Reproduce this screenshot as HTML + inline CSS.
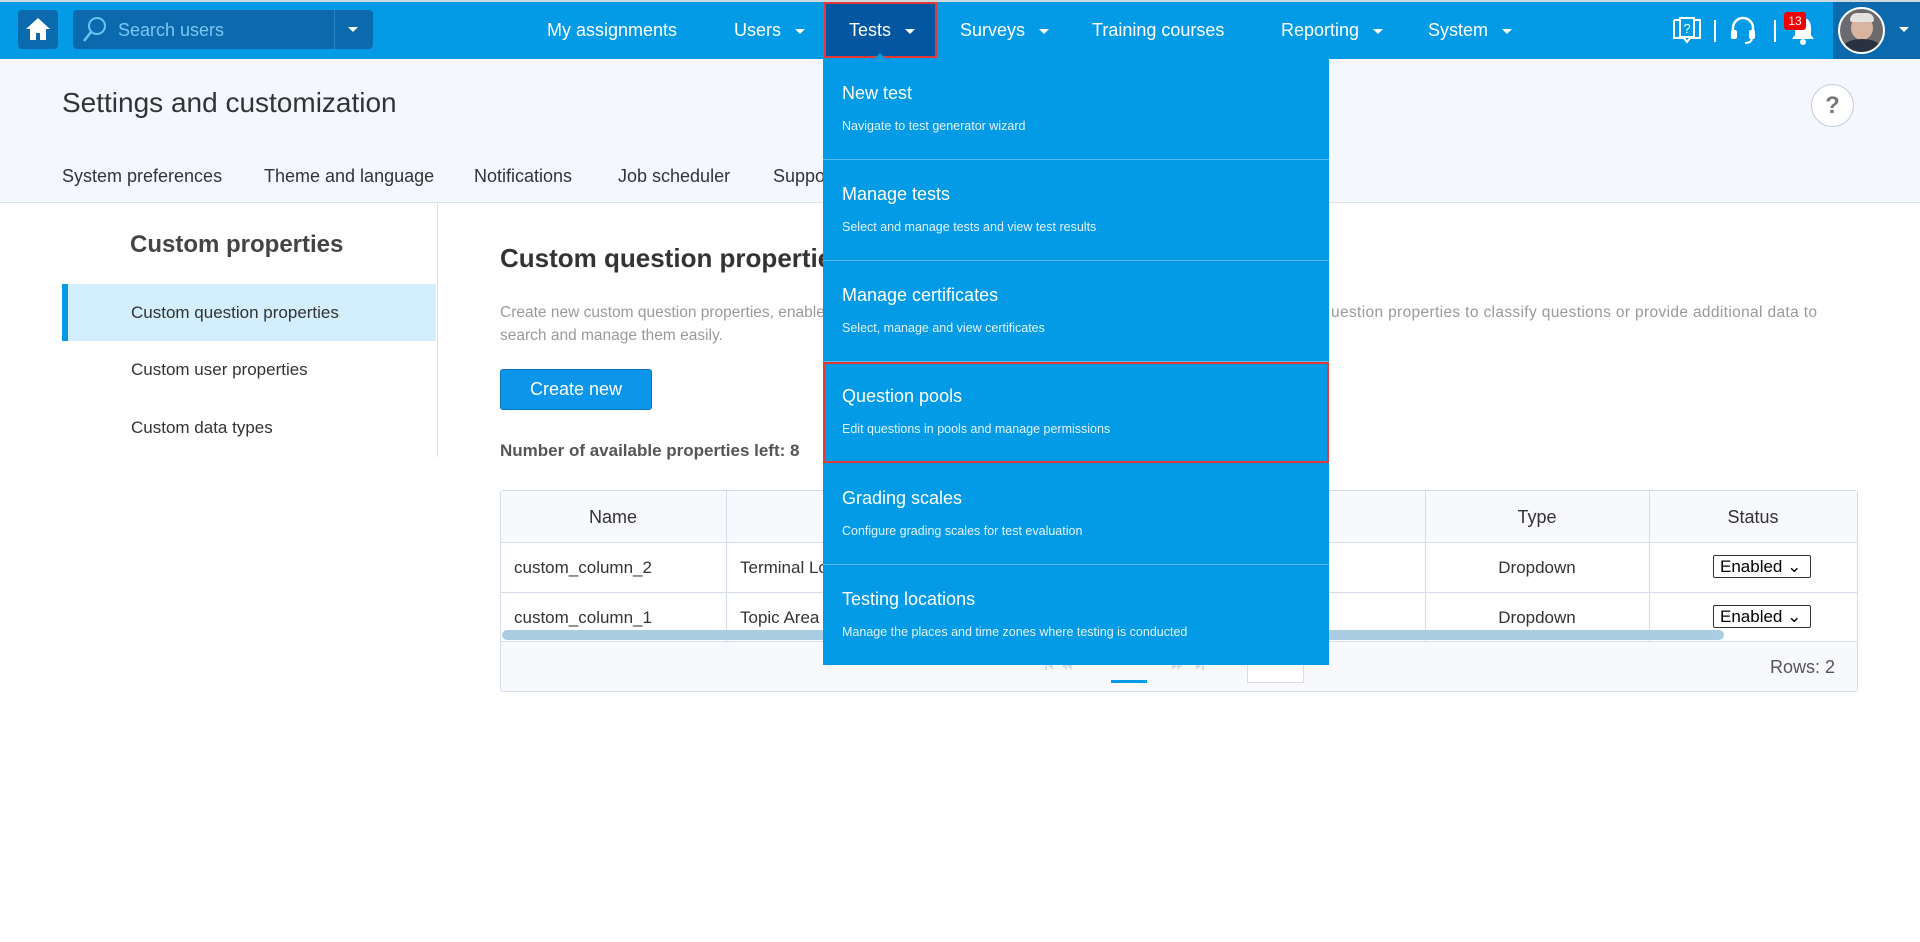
<!DOCTYPE html>
<html><head><meta charset="utf-8"><style>
*{box-sizing:border-box;margin:0;padding:0}
body{width:1920px;height:942px;overflow:hidden;background:#fff;font-family:"Liberation Sans",sans-serif;position:relative;color:#333}
.abs{position:absolute}
.hdr{left:0;top:0;width:1920px;height:59px;background:#039be5;border-top:2px solid #cfd8dc}
.nav{top:1px;height:59px;line-height:59px;color:#fff;font-size:18px;white-space:nowrap}
.car{display:inline-block;width:0;height:0;border-left:5px solid transparent;border-right:5px solid transparent;border-top:5px solid #fff;vertical-align:middle;margin-left:14px}
.sub{left:0;top:59px;width:1920px;height:144px;background:#f4f8fe;border-bottom:1px solid #dde1ea}
.tab{top:166px;font-size:18px;color:#333}
.menu{left:823px;top:59px;width:506px;height:606px;background:#039be5}
.mi{position:absolute;left:0;width:506px;height:101px;border-bottom:1px solid #57baf0}
.mi b{position:absolute;left:19px;top:24px;font-weight:normal;font-size:18px;color:#fff}
.mi i{position:absolute;left:19px;top:60px;font-style:normal;font-size:12.5px;color:#e3f4fd}
.th{top:490px;height:52px;line-height:54px;font-size:18px;color:#333}
.td{font-size:17px;color:#333}
.sel{width:98px;height:23px;border:1px solid #333;border-radius:2px;background:#fff;font-size:17px;line-height:21px;padding-left:6px;color:#000}
</style></head><body>
<div class="abs hdr"></div>
<div class="abs" style="left:18px;top:10px;width:40px;height:39px;background:#0a6aad;border-radius:4px"></div>
<svg class="abs" style="left:25px;top:17px" width="26" height="24" viewBox="0 0 26 24"><path d="M13 1 L1 12 H5 V23 H11 V16 H15 V23 H21 V12 H25 Z" fill="#fff"/></svg>
<div class="abs" style="left:73px;top:10px;width:300px;height:39px;background:#0a6aad;border-radius:4px"></div>
<div class="abs" style="left:334px;top:10px;width:1px;height:39px;background:#2b86c4"></div>
<svg class="abs" style="left:82px;top:16px" width="26" height="28" viewBox="0 0 26 28"><circle cx="15" cy="10" r="8" fill="none" stroke="#6cc3f2" stroke-width="2"/><path d="M9 16 L2 25" stroke="#6cc3f2" stroke-width="2.5"/></svg>
<div class="abs" style="left:118px;top:11px;line-height:39px;font-size:18px;color:#7cc6ef">Search users</div>
<div class="abs" style="left:348px;top:27px;width:0;height:0;border-left:5px solid transparent;border-right:5px solid transparent;border-top:5px solid #fff"></div>
<div class="abs nav" style="left:547px">My assignments</div>
<div class="abs nav" style="left:734px">Users<span class="car"></span></div>
<div class="abs" style="left:824px;top:2px;width:113px;height:56px;background:#0456a0;border:2px solid #e53935"></div>
<div class="abs nav" style="left:849px">Tests<span class="car"></span></div>
<div class="abs nav" style="left:960px">Surveys<span class="car"></span></div>
<div class="abs nav" style="left:1092px">Training courses</div>
<div class="abs nav" style="left:1281px">Reporting<span class="car"></span></div>
<div class="abs nav" style="left:1428px">System<span class="car"></span></div>
<svg class="abs" style="left:1672px;top:16px" width="30" height="28" viewBox="0 0 30 28"><path d="M2 4 V22 H12 L15 26 L18 22 H28 V4 H22 M8 4 H2" fill="none" stroke="#fff" stroke-width="2"/><rect x="8" y="2" width="14" height="19" fill="none" stroke="#fff" stroke-width="2"/><text x="15" y="17" font-size="13" fill="#fff" text-anchor="middle" font-family="Liberation Sans">?</text></svg>
<div class="abs" style="left:1714px;top:20px;width:2px;height:22px;background:#fff"></div>
<svg class="abs" style="left:1729px;top:15px" width="28" height="30" viewBox="0 0 28 30"><path d="M4 17 V13 A10 10 0 0 1 24 13 V17" fill="none" stroke="#fff" stroke-width="2.5"/><rect x="2" y="15" width="6" height="9" rx="2" fill="#fff"/><rect x="20" y="15" width="6" height="9" rx="2" fill="#fff"/><path d="M23 24 Q22 28 16 28" fill="none" stroke="#fff" stroke-width="2"/></svg>
<div class="abs" style="left:1774px;top:20px;width:2px;height:22px;background:#fff"></div>
<svg class="abs" style="left:1790px;top:15px" width="26" height="30" viewBox="0 0 26 30"><path d="M13 3 C7 3 5 8 5 13 V20 L2 24 H24 L21 20 V13 C21 8 19 3 13 3Z" fill="#fff"/><circle cx="13" cy="27" r="3" fill="#fff"/></svg>
<div class="abs" style="left:1784px;top:12px;width:22px;height:18px;background:#f10000;border-radius:3px;color:#fff;font-size:12px;line-height:18px;text-align:center">13</div>
<div class="abs" style="left:1833px;top:2px;width:87px;height:57px;background:#0a6aad"></div>
<div class="abs" style="left:1838px;top:7px;width:47px;height:47px;border-radius:50%;border:2px solid #fff;overflow:hidden;background:#6b6a6e">
<div class="abs" style="left:11px;top:7px;width:22px;height:24px;border-radius:50%;background:#d9b4a0"></div>
<div class="abs" style="left:10px;top:4px;width:24px;height:9px;border-radius:10px 10px 3px 3px;background:#e4e2de"></div>
<div class="abs" style="left:2px;top:30px;width:40px;height:20px;border-radius:50% 50% 0 0;background:#2a3240"></div>
</div>
<div class="abs" style="left:1899px;top:27px;width:0;height:0;border-left:5px solid transparent;border-right:5px solid transparent;border-top:5px solid #fff"></div>

<div class="abs sub"></div>
<div class="abs" style="left:62px;top:87px;font-size:28px;color:#333">Settings and customization</div>
<div class="abs" style="left:1811px;top:84px;width:43px;height:43px;border-radius:50%;border:1px solid #c6ccd8;background:#fff;text-align:center;line-height:41px;font-size:24px;font-weight:bold;color:#777">?</div>
<div class="abs tab" style="left:62px">System preferences</div>
<div class="abs tab" style="left:264px">Theme and language</div>
<div class="abs tab" style="left:474px">Notifications</div>
<div class="abs tab" style="left:618px">Job scheduler</div>
<div class="abs tab" style="left:773px">Support</div>

<div class="abs" style="left:130px;top:231px;font-size:24px;font-weight:bold;color:#444">Custom properties</div>
<div class="abs" style="left:62px;top:284px;width:374px;height:57px;background:#d3eefc;border-left:6px solid #039be5"></div>
<div class="abs" style="left:131px;top:303px;font-size:17px;color:#333">Custom question properties</div>
<div class="abs" style="left:131px;top:360px;font-size:17px;color:#333">Custom user properties</div>
<div class="abs" style="left:131px;top:418px;font-size:17px;color:#333">Custom data types</div>
<div class="abs" style="left:437px;top:203px;width:1px;height:254px;background:#dde1ea"></div>

<div class="abs" style="left:500px;top:243px;font-size:26px;font-weight:bold;color:#333">Custom question properties</div>
<div class="abs" style="left:500px;top:301px;font-size:15.5px;color:#9a9a9a;line-height:23px">Create new custom question properties, enable</div>
<div class="abs" style="left:1331px;top:301px;font-size:15.5px;color:#9a9a9a;line-height:23px;letter-spacing:0.35px">uestion properties to classify questions or provide additional data to</div>
<div class="abs" style="left:500px;top:324px;font-size:15.5px;color:#9a9a9a;line-height:23px">search and manage them easily.</div>
<div class="abs" style="left:500px;top:369px;width:152px;height:41px;background:#0b96ea;border:1px solid #0a74bf;border-radius:3px;color:#fff;font-size:18px;text-align:center;line-height:39px">Create new</div>
<div class="abs" style="left:500px;top:441px;font-size:17px;font-weight:bold;color:#555">Number of available properties left: 8</div>

<div class="abs" style="left:500px;top:490px;width:1358px;height:202px;border:1px solid #d5dbe8;border-radius:3px;background:#fff"></div>
<div class="abs" style="left:501px;top:491px;width:1356px;height:51px;background:#f8f9fc"></div>
<div class="abs" style="left:501px;top:642px;width:1356px;height:49px;background:#f8f9fc"></div>
<div class="abs" style="left:501px;top:542px;width:1356px;height:1px;background:#d5dbe8"></div>
<div class="abs" style="left:501px;top:592px;width:1356px;height:1px;background:#d5dbe8"></div>
<div class="abs" style="left:501px;top:641px;width:1356px;height:1px;background:#d5dbe8"></div>
<div class="abs" style="left:726px;top:491px;width:1px;height:150px;background:#d5dbe8"></div>
<div class="abs" style="left:1425px;top:491px;width:1px;height:150px;background:#d5dbe8"></div>
<div class="abs" style="left:1649px;top:491px;width:1px;height:150px;background:#d5dbe8"></div>
<div class="abs th" style="left:500px;width:226px;text-align:center">Name</div>
<div class="abs th" style="left:1425px;width:224px;text-align:center">Type</div>
<div class="abs th" style="left:1649px;width:208px;text-align:center">Status</div>
<div class="abs td" style="left:514px;top:558px">custom_column_2</div>
<div class="abs td" style="left:740px;top:558px">Terminal Lo</div>
<div class="abs td" style="left:1425px;width:224px;text-align:center;top:558px">Dropdown</div>
<div class="abs sel" style="left:1713px;top:555px">Enabled ⌄</div>
<div class="abs td" style="left:514px;top:608px">custom_column_1</div>
<div class="abs td" style="left:740px;top:608px">Topic Area</div>
<div class="abs td" style="left:1425px;width:224px;text-align:center;top:608px">Dropdown</div>
<div class="abs sel" style="left:1713px;top:605px">Enabled ⌄</div>
<div class="abs" style="left:502px;top:630px;width:1222px;height:10px;border-radius:5px;background:#abcde2"></div>
<svg class="abs" style="left:1045px;top:661px" width="40" height="10" viewBox="0 0 40 10"><rect x="0" y="1" width="2" height="8" fill="#d5dbe4"/><path d="M8 1 L3 5 L8 9Z M22 1 L17 5 L22 9Z M27 1 L22 5 L27 9Z" fill="#d5dbe4"/></svg>
<svg class="abs" style="left:1172px;top:661px" width="40" height="10" viewBox="0 0 40 10"><path d="M0 1 L5 5 L0 9Z M5 1 L10 5 L5 9Z M24 1 L29 5 L24 9Z" fill="#d5dbe4"/><rect x="30" y="1" width="2" height="8" fill="#d5dbe4"/></svg>
<div class="abs" style="left:1111px;top:680px;width:36px;height:3px;background:#039be5"></div>
<div class="abs" style="left:1247px;top:655px;width:57px;height:28px;border:1px solid #ddd;background:#fff"></div>
<div class="abs" style="left:1770px;top:657px;font-size:18px;color:#555">Rows: 2</div>

<div class="abs menu">
<div class="mi" style="top:0"><b>New test</b><i>Navigate to test generator wizard</i></div>
<div class="mi" style="top:101px"><b>Manage tests</b><i>Select and manage tests and view test results</i></div>
<div class="mi" style="top:202px"><b>Manage certificates</b><i>Select, manage and view certificates</i></div>
<div class="mi" style="top:303px;border:2px solid #e53935"><b style="left:17px;top:22px">Question pools</b><i style="left:17px;top:58px">Edit questions in pools and manage permissions</i></div>
<div class="mi" style="top:405px"><b>Grading scales</b><i>Configure grading scales for test evaluation</i></div>
<div class="mi" style="top:506px;border:none"><b>Testing locations</b><i>Manage the places and time zones where testing is conducted</i></div>
</div>
<div class="abs" style="left:874px;top:53px;width:0;height:0;border-left:6px solid transparent;border-right:6px solid transparent;border-bottom:6px solid #039be5"></div>
</body></html>
